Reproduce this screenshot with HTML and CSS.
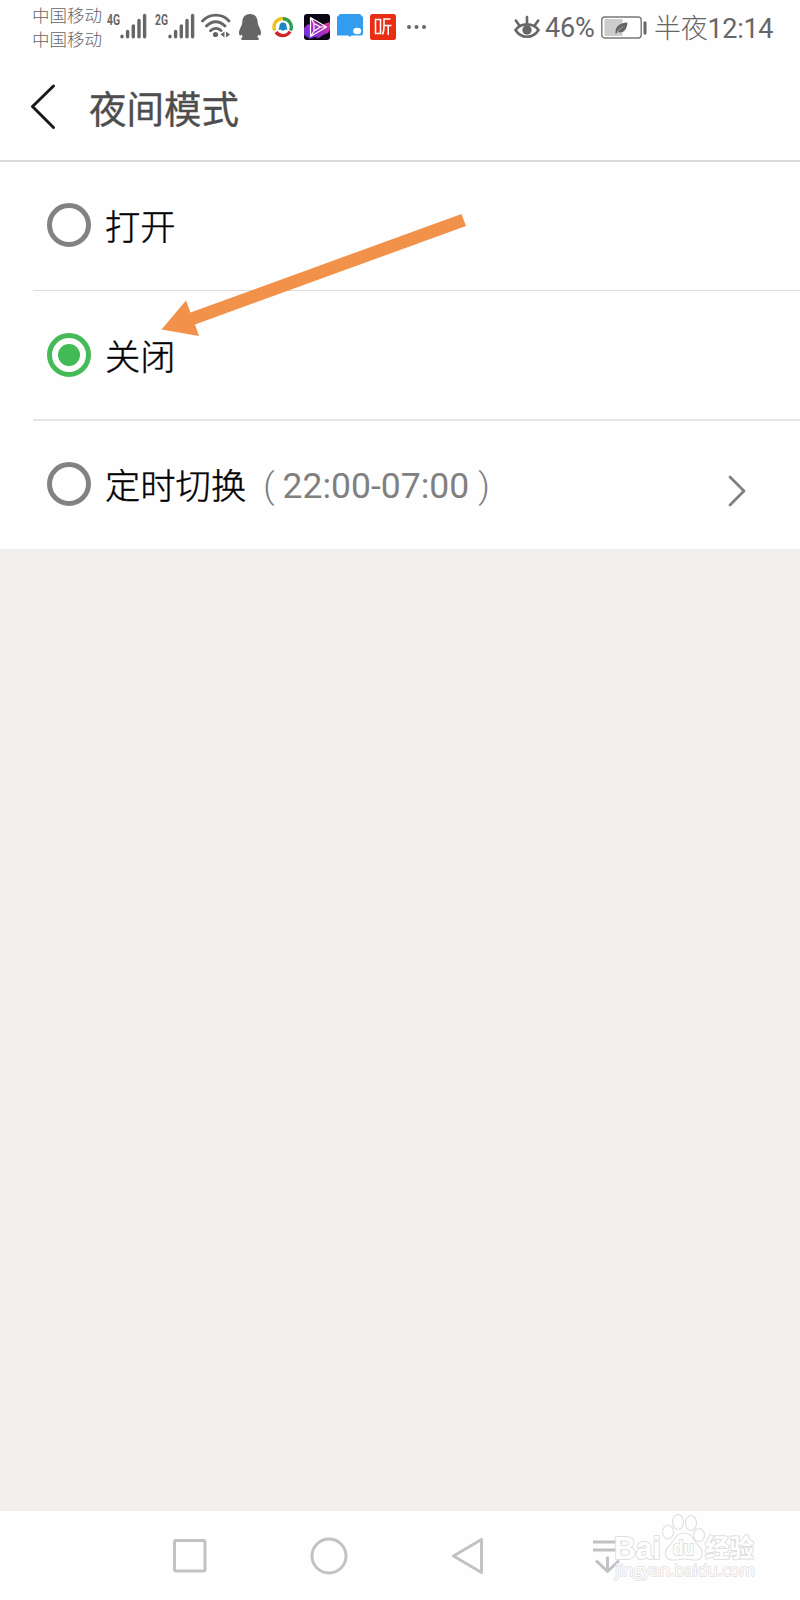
FILE: index.html
```html
<!DOCTYPE html>
<html lang="zh-CN">
<head>
    <meta charset="UTF-8">
    <meta name="viewport" content="width=device-width, initial-scale=1.0">
    <title>夜间模式</title>
    <link rel="stylesheet" href="styles.css">
</head>
<body>
    <div class="status-bar">
        <div class="carriers">
            <div>中国移动</div>
            <div>中国移动</div>
        </div>
        <svg class="signal" width="41" height="26" viewBox="0 0 41 26">
            <text x="0" y="12" textLength="13" lengthAdjust="spacingAndGlyphs">4G</text>
            <path d="M15 23.2v.6M20.6 18.5v5.3M26.3 13v10.8M32 7.5v16.3M37.6 2.5v21.3"/>
        </svg>
        <svg class="signal" width="41" height="26" viewBox="0 0 41 26">
            <text x="0" y="12" textLength="13" lengthAdjust="spacingAndGlyphs">2G</text>
            <path d="M15 23.2v.6M20.6 18.5v5.3M26.3 13v10.8M32 7.5v16.3M37.6 2.5v21.3"/>
        </svg>
        <svg class="wifi" width="30" height="26" viewBox="0 0 30 26">
            <path class="arc" d="M1.5 8C9 .2 21 .2 28 8M5.5 13C11 7.300 18.500 7.300 24 13M9.500 17.700C12.500 14.700 17 14.700 20 17.500"/>
            <circle cx="14.500" cy="21.500" r="2.600"/>
            <path d="M19.500 21.500l4-3v6zM25 18.500v6l4-3z"/>
        </svg>
        <svg class="qq" width="24" height="28" viewBox="0 0 24 28">
            <path d="M12 1C6.500 1 4.300 5 4.300 9.500C4.300 12 2 15 1.200 18C.7 20.500 1.200 23 2.500 22.500L3.500 21.500C3.800 22.500 4.200 23 4.800 23.800C3 24.500 2.800 26.800 4 27H20C21.200 26.800 21 24.500 19.200 23.800C19.800 23 20.200 22.500 20.500 21.500L21.500 22.500C22.800 23 23.300 20.500 22.800 18C22 15 19.700 12 19.700 9.500C19.700 5 17.500 1 12 1Z"/>
        </svg>
        <svg class="ring" width="22" height="22" viewBox="0 0 22 22">
            <path stroke="#f0c020" d="M2.800 14.500A8.300 8.300 0 0 1 11 2.700"/>
            <path stroke="#2f9e4f" d="M11 2.700A8.300 8.300 0 0 1 18.500 14.500"/>
            <path stroke="#d0242c" d="M18 15.500A8.300 8.300 0 0 1 4 16"/>
            <path fill="#1c86c8" d="M11 6.500c-3 0-3.500 2.500-3.500 4l-1 3.500 2-.5c1.500 1.500 3.500 1.500 5 0l2 .5-1-3.500c0-1.500-.5-4-3.500-4z"/>
        </svg>
        <svg class="video" width="26" height="26" viewBox="0 0 26 26">
            <defs>
                <linearGradient id="neon" x1="0" y1="1" x2="1" y2="0">
                    <stop offset="0" stop-color="#5a32e0"/>
                    <stop offset=".5" stop-color="#a62cc8"/>
                    <stop offset="1" stop-color="#ee3c88"/>
                </linearGradient>
            </defs>
            <rect width="26" height="26" rx="3" fill="#0c0614"/>
            <path fill="url(#neon)" d="M0 14l4-4 2 1 2-6 5 4 4 2 9-3v8l-2 3-5 2-4 3-5-1-4 2-6-4z"/>
            <path class="line" d="M6.500 3.500L22.500 13L6.500 22.500ZM10 9.500L16.500 13L10 17ZM6.500 3.500L10 9.500M22.500 13H16.500M6.500 22.500L10 17"/>
        </svg>
        <svg class="chat" width="26" height="26" viewBox="0 0 26 26">
            <path fill="#329cef" d="M3 0H23L26 3V19Q26 21.500 23.500 21.500H14.500L13 23L11.500 21.500H0V3Z"/>
            <ellipse cx="20.200" cy="17" rx="4" ry="3.300" fill="#fff"/>
        </svg>
        <svg class="listen" width="26" height="26" viewBox="0 0 26 26">
            <rect width="26" height="26" rx="2.500" fill="#ea2c10"/>
            <path class="line" d="M5.500 5.500H10.500V19.500H5.500ZM20.500 5H14V12Q14 17 12.500 20.500M14 11.500H21.500M18.200 11.500V21"/>
        </svg>
        <svg class="dots" width="20" height="6" viewBox="0 0 20 6">
            <circle cx="3" cy="3" r="2"/>
            <circle cx="10.500" cy="3" r="2"/>
            <circle cx="18" cy="3" r="2"/>
        </svg>
        <svg class="eye" width="28" height="26" viewBox="0 0 28 26">
            <path d="M2.500 16C8 8.500 20 8.500 25.500 16C20 25 8 25 2.500 16ZM14 9V3M6 11L2.800 6.500M22 11L25.200 6.500"/>
            <circle cx="14" cy="16" r="4.700"/>
        </svg>
        <span class="percent">46%</span>
        <svg class="battery" width="46" height="24" viewBox="0 0 46 24">
            <rect x="3.500" y="3" width="18" height="17" fill="#ccc"/>
            <rect class="shell" x=".8" y="1" width="39.400" height="21" rx="3"/>
            <rect x="42.500" y="5.500" width="3" height="13" rx="1" fill="#666"/>
            <path fill="#666" d="M14.500 17.500C14 11 18 7 26.500 6.500C26 13.500 22.500 18 16.500 16L15 18Z"/>
            <path stroke="#ccc" stroke-width=".7" fill="none" d="M16 16L22 10.500"/>
        </svg>
        <span class="clock"><span class="period">半夜</span>12:14</span>
    </div>

    <div class="title-bar">
        <svg class="back" width="26" height="46" viewBox="0 0 26 46">
            <path d="M23.500 3L2.500 23.500L23.500 44.500"/>
        </svg>
        <h1>夜间模式</h1>
    </div>

    <div class="options">
        <div class="option">
            <span class="radio"></span>
            <span class="label">打开</span>
        </div>
        <div class="option">
            <span class="radio checked"></span>
            <span class="label">关闭</span>
        </div>
        <div class="option">
            <span class="radio"></span>
            <span class="label">定时切换</span>
            <span class="time"><i>(</i>22:00-07:00<i>)</i></span>
            <svg class="more" width="20" height="34" viewBox="0 0 20 34">
                <path d="M3 3L17 17L3 31"/>
            </svg>
        </div>
        <svg class="pointer" width="306" height="124" viewBox="0 0 306 124">
            <path d="M.5 116.500L25 87.500L29.500 99.500L300.500 1L305 13L34 111.500L38 123Z"/>
        </svg>
    </div>

    <div class="nav-bar">
        <svg width="34" height="34" viewBox="0 0 34 34">
            <rect x="1.500" y="1.500" width="30.500" height="30.500" rx="1.500"/>
        </svg>
        <svg width="38" height="38" viewBox="0 0 38 38">
            <circle cx="19" cy="19" r="17"/>
        </svg>
        <svg width="34" height="38" viewBox="0 0 34 38">
            <path d="M30.500 2.500V35.500L2.500 19Z"/>
        </svg>
        <svg class="hide-bar" width="32" height="36" viewBox="0 0 32 36">
            <path d="M1 4H30M1 12H30M15.500 18.500V33M4 22.500L15.500 33.500L27 22.500"/>
        </svg>
        <svg class="watermark" width="150" height="74" viewBox="0 0 150 74">
            <text class="brand" x="3" y="46" textLength="47" lengthAdjust="spacingAndGlyphs">Bai</text>
            <ellipse cx="57" cy="19" rx="5.500" ry="7"/>
            <ellipse cx="67" cy="9" rx="5.500" ry="7.500"/>
            <ellipse cx="80" cy="10" rx="5.500" ry="7.500"/>
            <ellipse cx="88" cy="22" rx="5.500" ry="6.500"/>
            <path d="M73 20C64 20 63 29 58 33C52 38 54 47 61 47C67 47 69 46 73 46C77 46 80 47 85 47C92 47 93 38 88 33C83 29 82 20 73 20Z"/>
            <text class="du" x="62" y="42" textLength="21" lengthAdjust="spacingAndGlyphs">du</text>
            <text class="cjk" x="94" y="44" textLength="49" lengthAdjust="spacingAndGlyphs">经验</text>
            <text class="site" x="4" y="63" textLength="140" lengthAdjust="spacingAndGlyphs">jingyan.baidu.com</text>
        </svg>
    </div>
</body>
</html>
```

FILE: styles.css
```css
* {
    margin: 0;
    padding: 0;
    box-sizing: border-box;
}
body {
    width: 800px;
    height: 1600px;
    display: flex;
    flex-direction: column;
    background: #f1f0ec;
    font-family: Roboto, "Noto Sans CJK SC", sans-serif;
    overflow: hidden;
}
svg {
    display: block;
    flex: none;
}

/* status bar */
.status-bar {
    height: 54px;
    display: flex;
    align-items: center;
    padding-left: 32px;
    background: #fefefe;
    color: #666;
    white-space: nowrap;
}
.carriers {
    width: 69px;
    font-size: 17.5px;
    line-height: 24.5px;
    font-weight: 300;
    margin: 2px 6px 0 0;
}
.signal {
    margin-right: 7px;
    margin-bottom: 2px;
    overflow: visible;
}
.signal text {
    font-size: 15px;
    font-weight: bold;
    fill: #666;
}
.signal path {
    stroke: #666;
    stroke-width: 3.4;
    stroke-linecap: round;
}
.wifi {
    margin: 0 7px 2px -2px;
    fill: #666;
}
.wifi .arc {
    fill: none;
    stroke: #666;
    stroke-width: 2.8;
    stroke-linecap: round;
}
.qq {
    fill: #666;
    margin-right: 10px;
}
.ring {
    fill: none;
    stroke-width: 3.4;
    margin-right: 10px;
}
.video {
    margin-right: 7px;
}
.video .line {
    fill: none;
    stroke: #fff;
    stroke-width: 1.2;
    stroke-linejoin: round;
}
.chat {
    margin-right: 7px;
}
.listen {
    margin-right: 10px;
}
.listen .line {
    fill: none;
    stroke: #fff;
    stroke-width: 1.6;
}
.dots {
    fill: #666;
    margin-right: 87px;
}
.eye {
    fill: #666;
    margin: 0 4px 0 0;
}
.eye path {
    fill: none;
    stroke: #666;
    stroke-width: 2.6;
    stroke-linecap: round;
}
.percent {
    width: 55px;
    margin-top: 2px;
    font-size: 27px;
    letter-spacing: -0.2px;
}
.battery {
    margin: 1px 0 0 1px;
}
.battery .shell {
    fill: none;
    stroke: #777;
    stroke-width: 1.4;
}
.clock {
    margin: -2px 0 0 7px;
    font-size: 27px;
    letter-spacing: -0.3px;
}
.clock .period {
    font-weight: 300;
}

/* title bar */
.title-bar {
    height: 108px;
    display: flex;
    align-items: center;
    padding: 0 30px 2px;
    background: #fefefe;
    border-bottom: 2px solid #dadada;
}
.back path {
    fill: none;
    stroke: #1a1a1a;
    stroke-width: 3;
    stroke-linecap: round;
    stroke-linejoin: round;
}
.title-bar h1 {
    margin: 8px 0 0 33px;
    font-size: 37.5px;
    font-weight: 400;
    line-height: 54px;
    color: #4d4d4d;
    -webkit-text-stroke: 0.3px #4d4d4d;
}

/* radio list */
.options {
    position: relative;
    background: #fefefe;
    padding-left: 33px;
}
.option {
    height: 129px;
    display: flex;
    align-items: center;
    padding: 0 52px 2px 14px;
    border-bottom: 1px solid #dcdcdc;
}
.option:nth-child(2) {
    height: 130px;
    padding-bottom: 1px;
    border-bottom: 2px solid #e4e4e4;
}
.option:nth-child(3) {
    height: 128px;
    border-bottom: none;
}
.radio {
    width: 44px;
    height: 44px;
    border: 5px solid #828282;
    border-radius: 50%;
    display: flex;
    align-items: center;
    justify-content: center;
}
.radio.checked {
    border-color: #46b958;
}
.radio.checked::after {
    content: '';
    width: 22px;
    height: 22px;
    border-radius: 50%;
    background: #42ba55;
}
.label {
    margin: 6px 0 0 14px;
    font-size: 35.3px;
    line-height: 50px;
    font-weight: 300;
    color: #000;
    -webkit-text-stroke: 0.4px #000;
}
.time {
    margin: 4px 0 0 17px;
    font-size: 35.5px;
    color: #808080;
}
.time i {
    font-style: normal;
    font-weight: 300;
}
.time i:first-child {
    margin-right: 8px;
}
.time i:last-child {
    margin-left: 9px;
}
.more {
    margin: 13px 1px 0 auto;
}
.more path {
    fill: none;
    stroke: #808080;
    stroke-width: 2.8;
    stroke-linecap: round;
    stroke-linejoin: round;
}
/* arrow drawn over the first two rows */
.pointer {
    position: absolute;
    left: 161px;
    top: 51px;
    fill: #f2914a;
}

/* system navigation */
.nav-bar {
    position: relative;
    height: 89px;
    margin-top: auto;
    display: flex;
    align-items: center;
    padding-left: 173px;
    gap: 103px;
    background: #fefefe;
}
.nav-bar > svg {
    fill: none;
    stroke: #c2c2c2;
    stroke-width: 3;
    stroke-linejoin: round;
}
.nav-bar .hide-bar {
    margin-left: 4px;
}
.nav-bar .watermark {
    position: absolute;
    left: 611px;
    top: 2px;
    fill: #fefefe;
    stroke: #dfdfdf;
    stroke-width: 1.1;
}
.watermark text {
    paint-order: stroke;
    stroke-width: 2;
}
.watermark .brand {
    font: bold 32px "Liberation Sans", sans-serif;
}
.watermark .du {
    font: bold 20px "Liberation Sans", sans-serif;
}
.watermark .cjk {
    font: bold 25px "Noto Sans CJK SC", sans-serif;
}
.watermark .site {
    font: 17px "Open Sans", sans-serif;
    stroke-width: 1.6;
}
```
